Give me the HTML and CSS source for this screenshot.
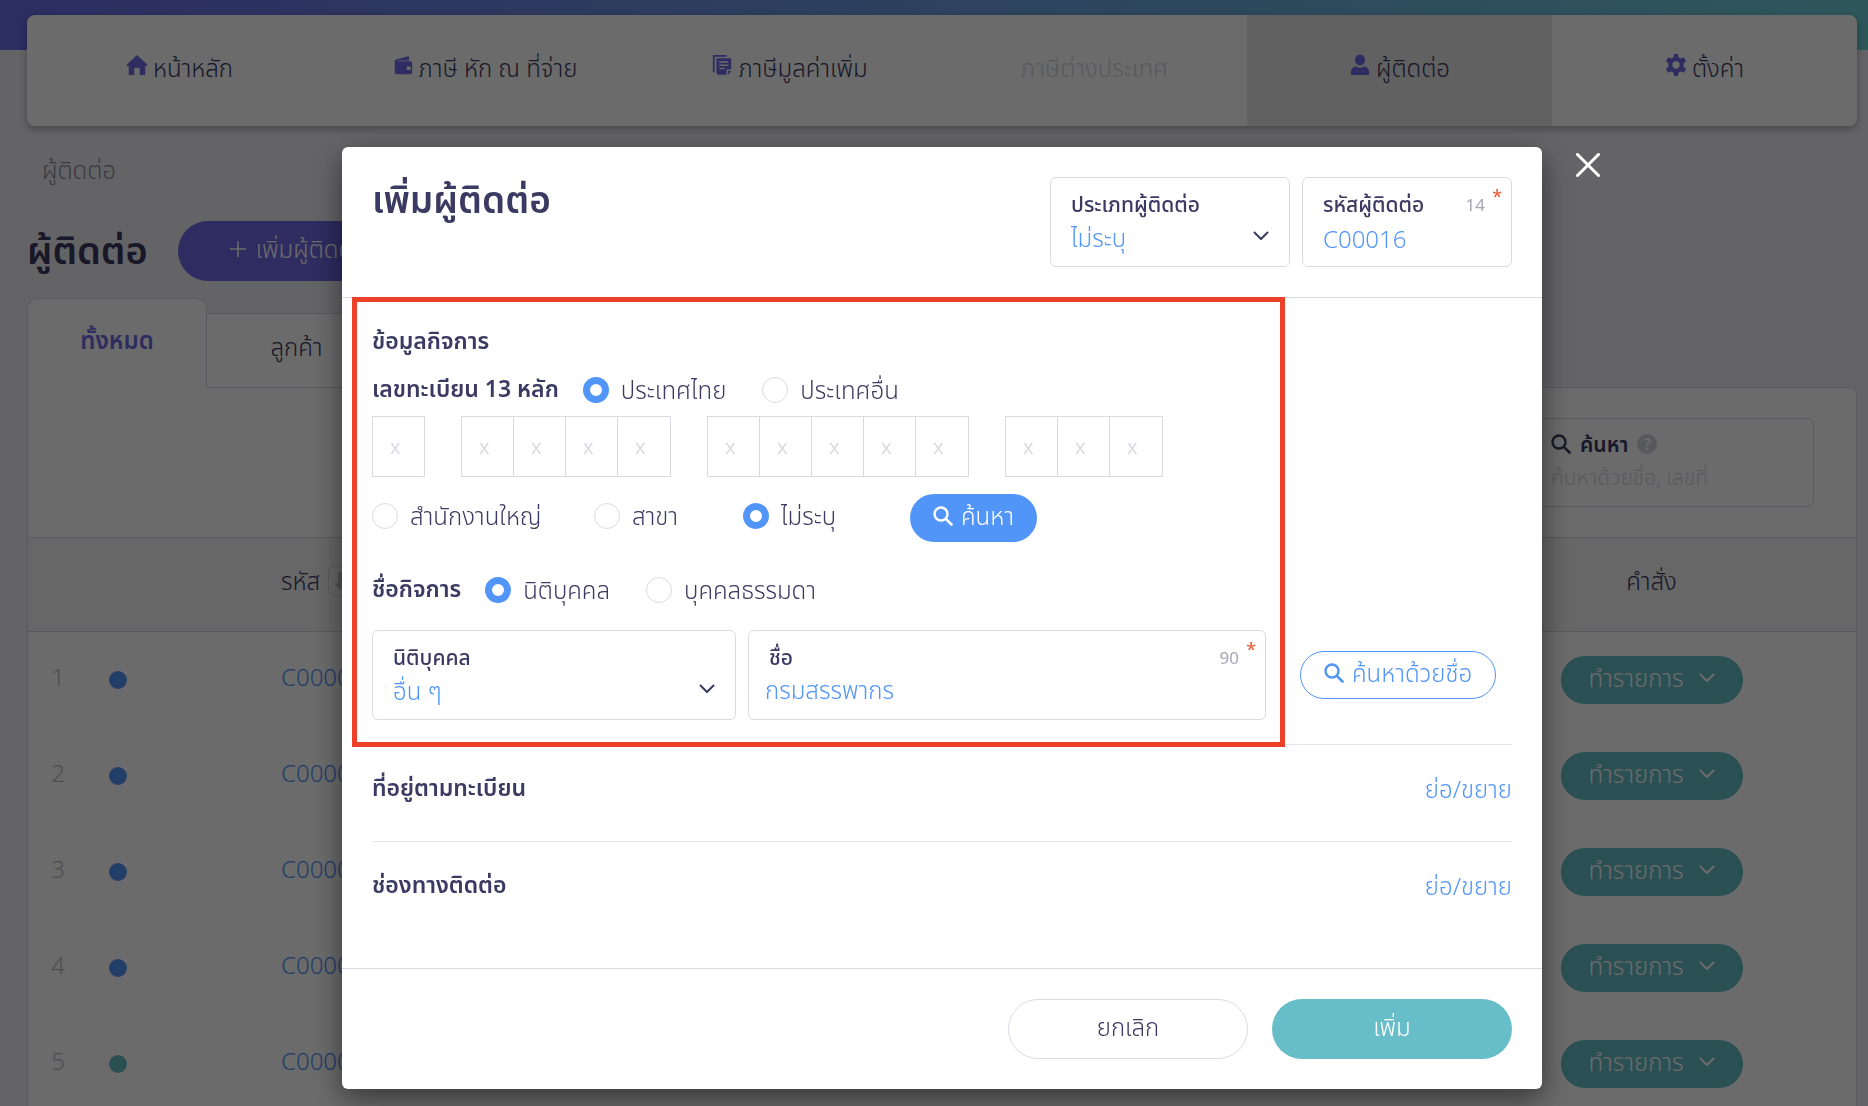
FILE: index.html
```html
<!DOCTYPE html>
<html lang="th">

<head>
    <meta charset="UTF-8">
    <meta name="viewport" content="width=device-width, initial-scale=1">
    <title>ผู้ติดต่อ</title>
    <link rel="stylesheet" href="styles.css">
</head>

<body>
    <!-- shared icons -->
    <svg class="sprite" aria-hidden="true">
        <symbol id="icon-search" viewBox="0 0 20 20">
            <circle cx="8" cy="8" r="6.5" fill="none" stroke="currentColor" stroke-width="2.4" />
            <path d="M12.8 12.8 18.5 18.5" stroke="currentColor" stroke-width="2.6" stroke-linecap="round" />
        </symbol>
        <symbol id="icon-down" viewBox="0 0 16 16">
            <path d="M1.500 4.500 8 11l6.500-6.500" fill="none" stroke="currentColor" stroke-width="2" stroke-linecap="round" stroke-linejoin="round" />
        </symbol>
    </svg>

    <div class="page">
        <header class="topbar">
            <nav class="menu">
                <a class="menu-item" href="#">
                    <svg class="menu-icon" viewBox="0 0 24 24"><path d="M12 1 1 11.500c-.6.7-.2 1.500.6 1.500H3v9c0 .8.4 1 1 1h5v-7c0-.6.4-1 1-1h4c.6 0 1 .4 1 1v7h5c.6 0 1-.4 1-1v-9h1.400c.8 0 1.200-.8.6-1.500z" /></svg>
                    หน้าหลัก
                </a>
                <a class="menu-item" href="#">
                    <svg class="menu-icon" viewBox="0 0 24 24"><path fill-rule="evenodd" d="M3 8.500C3 7 4 6.200 5.500 5.800L17 2.600c.8-.2 1.500.3 1.500 1.100V7H6v1h13.500C21 8 22 9 22 10.500v9c0 1.500-1 2.500-2.500 2.500h-14C4 22 3 21 3 19.500zM17 13.500c-.8 0-1 .5-1 1v2c0 .5.200 1 1 1h2.500c.6 0 1-.4 1-1v-2c0-.6-.4-1-1-1z" /></svg>
                    ภาษี หัก ณ ที่จ่าย
                </a>
                <a class="menu-item" href="#">
                    <svg class="menu-icon" viewBox="0 0 24 24"><path d="M2 1h15v2H4v17H2z" /><path fill-rule="evenodd" d="M6 4.500h16V17h-5v5.500H8c-1.200 0-2-.8-2-2zM9 8v1.600h10V8zm0 3.500v1.600h10v-1.600zM9 15v1.600h6V15zM18.500 18.500H22L18.500 22.500z" /></svg>
                    ภาษีมูลค่าเพิ่ม
                </a>
                <a class="menu-item disabled" href="#">ภาษีต่างประเทศ</a>
                <a class="menu-item active" href="#">
                    <svg class="menu-icon" viewBox="0 0 24 24"><ellipse cx="12" cy="6.500" rx="5.500" ry="6" /><path d="M2 23v-3c0-4 3-6.500 5.500-6.500 2.500 2 6.500 2 9 0C19 13.500 22 16 22 20v3z" /></svg>
                    ผู้ติดต่อ
                </a>
                <a class="menu-item" href="#">
                    <svg class="menu-icon" viewBox="0 0 24 24"><path fill-rule="evenodd" d="M10 0h4l.7 3.500 2.300 1.300L20.500 3.600l2.500 4.200-2.700 2.400v3.600l2.700 2.400-2.500 4.200-3.500-1.200-2.300 1.300L14 24h-4l-.7-3.500L7 19.200l-3.500 1.200L1 16.200l2.700-2.400v-3.600L1 7.800l2.500-4.200L7 4.800l2.300-1.300zm2 8a4 4 0 1 0 0 8 4 4 0 0 0 0-8z" /></svg>
                    ตั้งค่า
                </a>
            </nav>
        </header>

        <main class="content">
            <p class="breadcrumb">ผู้ติดต่อ</p>
            <div class="page-head">
                <h1>ผู้ติดต่อ</h1>
                <button class="btn-add" type="button">
                    <svg viewBox="0 0 16 16"><path d="M8 0v16M0 8h16" stroke="currentColor" stroke-width="1.600" /></svg>
                    เพิ่มผู้ติดต่อ
                </button>
            </div>

            <div class="tabs">
                <button class="tab current" type="button">ทั้งหมด</button>
                <button class="tab" type="button">ลูกค้า</button>
            </div>

            <section class="panel">
                <div class="filter">
                    <div class="search-box">
                        <label for="search">
                            <svg class="icon-search"><use href="#icon-search" /></svg>
                            ค้นหา
                            <span class="help">?</span>
                        </label>
                        <input id="search" type="text" placeholder="ค้นหาด้วยชื่อ, เลขที่">
                    </div>
                </div>

                <table class="contacts">
                    <thead>
                        <tr>
                            <th class="col-no"></th>
                            <th class="col-dot"></th>
                            <th class="col-code">
                                <span class="sortable">รหัส
                                    <span class="sort"><svg viewBox="0 0 12 20"><path d="M4 1h4v11h4l-6 7-6-7h4z" /></svg></span>
                                </span>
                            </th>
                            <th class="col-action">คำสั่ง</th>
                        </tr>
                    </thead>
                    <tbody>
                        <tr>
                            <td class="col-no">1</td>
                            <td class="col-dot"><span class="dot"></span></td>
                            <td class="col-code"><a href="#">C00001</a></td>
                            <td class="col-action"><button class="btn-action" type="button">ทำรายการ <svg class="icon-down"><use href="#icon-down" /></svg></button></td>
                        </tr>
                        <tr>
                            <td class="col-no">2</td>
                            <td class="col-dot"><span class="dot"></span></td>
                            <td class="col-code"><a href="#">C00002</a></td>
                            <td class="col-action"><button class="btn-action" type="button">ทำรายการ <svg class="icon-down"><use href="#icon-down" /></svg></button></td>
                        </tr>
                        <tr>
                            <td class="col-no">3</td>
                            <td class="col-dot"><span class="dot"></span></td>
                            <td class="col-code"><a href="#">C00003</a></td>
                            <td class="col-action"><button class="btn-action" type="button">ทำรายการ <svg class="icon-down"><use href="#icon-down" /></svg></button></td>
                        </tr>
                        <tr>
                            <td class="col-no">4</td>
                            <td class="col-dot"><span class="dot"></span></td>
                            <td class="col-code"><a href="#">C00004</a></td>
                            <td class="col-action"><button class="btn-action" type="button">ทำรายการ <svg class="icon-down"><use href="#icon-down" /></svg></button></td>
                        </tr>
                        <tr>
                            <td class="col-no">5</td>
                            <td class="col-dot"><span class="dot teal"></span></td>
                            <td class="col-code"><a href="#">C00005</a></td>
                            <td class="col-action"><button class="btn-action" type="button">ทำรายการ <svg class="icon-down"><use href="#icon-down" /></svg></button></td>
                        </tr>
                    </tbody>
                </table>
            </section>
        </main>
    </div>

    <div class="backdrop">
        <div class="modal" role="dialog" aria-modal="true" aria-labelledby="modalTitle">
            <button class="modal-close" type="button" aria-label="ปิด">
                <svg viewBox="0 0 24 24"><path d="M1.500 1.500l21 21M22.500 1.500l-21 21" stroke="currentColor" stroke-width="3" stroke-linecap="round" /></svg>
            </button>

            <div class="modal-header">
                <h2 id="modalTitle">เพิ่มผู้ติดต่อ</h2>
                <div class="field field-type">
                    <label for="contactType">ประเภทผู้ติดต่อ</label>
                    <select id="contactType">
                        <option>ไม่ระบุ</option>
                    </select>
                    <svg class="icon-down"><use href="#icon-down" /></svg>
                </div>
                <div class="field field-code">
                    <label for="contactCode">รหัสผู้ติดต่อ</label>
                    <span class="limit">14</span>
                    <span class="required">*</span>
                    <input id="contactCode" type="text" value="C00016">
                </div>
            </div>

            <div class="modal-body">
                <section class="company">
                    <h3>ข้อมูลกิจการ</h3>

                    <div class="line">
                        <h3>เลขทะเบียน 13 หลัก</h3>
                        <label class="radio"><input type="radio" name="country" checked>ประเทศไทย</label>
                        <label class="radio"><input type="radio" name="country">ประเทศอื่น</label>
                    </div>

                    <div class="tax-id">
                        <div class="digits">
                            <input type="text" placeholder="x" aria-label="หลักที่ 1">
                        </div>
                        <div class="digits">
                            <input type="text" placeholder="x" aria-label="หลักที่ 2">
                            <input type="text" placeholder="x" aria-label="หลักที่ 3">
                            <input type="text" placeholder="x" aria-label="หลักที่ 4">
                            <input type="text" placeholder="x" aria-label="หลักที่ 5">
                        </div>
                        <div class="digits">
                            <input type="text" placeholder="x" aria-label="หลักที่ 6">
                            <input type="text" placeholder="x" aria-label="หลักที่ 7">
                            <input type="text" placeholder="x" aria-label="หลักที่ 8">
                            <input type="text" placeholder="x" aria-label="หลักที่ 9">
                            <input type="text" placeholder="x" aria-label="หลักที่ 10">
                        </div>
                        <div class="digits">
                            <input type="text" placeholder="x" aria-label="หลักที่ 11">
                            <input type="text" placeholder="x" aria-label="หลักที่ 12">
                            <input type="text" placeholder="x" aria-label="หลักที่ 13">
                        </div>
                    </div>

                    <div class="branch">
                        <label class="radio"><input type="radio" name="branch">สำนักงานใหญ่</label>
                        <label class="radio"><input type="radio" name="branch">สาขา</label>
                        <label class="radio"><input type="radio" name="branch" checked>ไม่ระบุ</label>
                        <button class="btn-search" type="button"><svg class="icon-search"><use href="#icon-search" /></svg>ค้นหา</button>
                    </div>

                    <div class="line">
                        <h3>ชื่อกิจการ</h3>
                        <label class="radio"><input type="radio" name="kind" checked>นิติบุคคล</label>
                        <label class="radio"><input type="radio" name="kind">บุคคลธรรมดา</label>
                    </div>

                    <div class="name-row">
                        <div class="field field-kind">
                            <label for="companyKind">นิติบุคคล</label>
                            <select id="companyKind">
                                <option>อื่น ๆ</option>
                            </select>
                            <svg class="icon-down"><use href="#icon-down" /></svg>
                        </div>
                        <div class="field field-name">
                            <label for="companyName">ชื่อ</label>
                            <span class="limit">90</span>
                            <span class="required">*</span>
                            <input id="companyName" type="text" value="กรมสรรพากร">
                        </div>
                        <div class="name-search">
                            <button class="btn-search outline" type="button"><svg class="icon-search"><use href="#icon-search" /></svg>ค้นหาด้วยชื่อ</button>
                        </div>
                    </div>

                    <!-- red frame over the part to fill in -->
                    <div class="highlight"></div>
                </section>

                <section class="fold">
                    <h3>ที่อยู่ตามทะเบียน</h3>
                    <a href="#">ย่อ/ขยาย</a>
                </section>
                <section class="fold">
                    <h3>ช่องทางติดต่อ</h3>
                    <a href="#">ย่อ/ขยาย</a>
                </section>
            </div>

            <div class="modal-footer">
                <button class="btn-cancel" type="button">ยกเลิก</button>
                <button class="btn-submit" type="button">เพิ่ม</button>
            </div>
        </div>
    </div>
</body>

</html>
```
FILE: styles.css
```css
* {
    box-sizing: border-box;
}

body {
    margin: 0;
    height: 100vh;
    overflow: hidden;
    background: #efeff5;
    color: #3b3a62;
    font-family: "Noto Sans", "Noto Sans Thai", sans-serif;
    font-size: 24px;
    font-weight: 300;
    line-height: 32px;
}

button,
input,
select {
    font: inherit;
    color: inherit;
}

button {
    border: 0;
    cursor: pointer;
}

a {
    color: #5295f8;
    text-decoration: none;
}

h1,
h2,
h3,
p {
    margin: 0;
}

h3 {
    padding-bottom: 4px;
    font-size: 23px;
    font-weight: 600;
    line-height: 28px;
}

.sprite {
    display: none;
}

.icon-search {
    width: 20px;
    height: 20px;
    flex: none;
}

.icon-down {
    width: 16px;
    height: 16px;
    flex: none;
}

/* page */

.page {
    height: 100vh;
    overflow: hidden;
    background: linear-gradient(90deg, #6a6ce8, #6fd0da) top / 100% 50px no-repeat;
}

.topbar {
    padding: 15px 11px 0 27px;
}

.menu {
    display: flex;
    height: 111px;
    background: #fff;
    border-radius: 8px;
    overflow: hidden;
    box-shadow: 0 3px 8px rgba(0, 0, 0, 0.3);
}

.menu-item {
    flex: 1;
    display: flex;
    align-items: center;
    justify-content: center;
    gap: 5px;
    padding-bottom: 6px;
    color: #3b3a62;
}

.menu-item.disabled {
    color: #d5d5dc;
}

.menu-item.active {
    background: #e6e6e6;
}

.menu-icon {
    width: 22px;
    height: 24px;
    margin-bottom: 6px;
    fill: #6e69e5;
}

.content {
    padding: 0 11px 0 27px;
}

.breadcrumb {
    padding: 28px 15px 35px;
    color: #8e8e9c;
}

.page-head {
    display: flex;
    align-items: center;
    gap: 30px;
}

h1 {
    font-size: 38px;
    font-weight: 600;
    line-height: 48px;
    padding-bottom: 4px;
}

.btn-add {
    display: flex;
    align-items: center;
    gap: 10px;
    height: 60px;
    padding: 0 52px 4px;
    border-radius: 30px;
    background: #6e69e5;
    color: #fff;
}

.btn-add svg {
    width: 16px;
    height: 16px;
}

.tabs {
    display: flex;
    align-items: flex-end;
    margin-top: 17px;
}

.tab {
    width: 180px;
    height: 74px;
    padding-bottom: 8px;
    background: #fff;
    border: 1px solid #d5d5e2;
    border-left: 0;
    border-bottom: 0;
}

.tab.current {
    height: 89px;
    border-left: 1px solid #d5d5e2;
    border-radius: 10px 10px 0 0;
    color: #6e69e5;
    font-weight: 600;
}

/* the open tab runs into the panel below it */
.tab.current {
    position: relative;
    margin-bottom: -1px;
    height: 90px;
}

.panel {
    background: #fff;
    border: 1px solid #d5d5e2;
    border-radius: 0 8px 0 0;
}

.filter {
    display: flex;
    justify-content: flex-end;
    padding: 30px 42px;
}

.search-box {
    width: 290px;
    height: 89px;
    padding: 9px 26px;
    border: 1px solid #d5d5e2;
    border-radius: 6px;
}

.search-box label {
    display: flex;
    align-items: center;
    gap: 9px;
    font-size: 21px;
    font-weight: 600;
}

.search-box input {
    width: 100%;
    height: 34px;
    padding: 0;
    border: 0;
    font-size: 21px;
}

.search-box input::placeholder {
    color: #d5d5dc;
}

.help {
    width: 20px;
    height: 20px;
    border-radius: 50%;
    background: #d2d3dc;
    color: #fff;
    font-size: 16px;
    line-height: 20px;
    text-align: center;
}

.contacts {
    width: 100%;
    border-collapse: collapse;
}

.contacts th {
    height: 94px;
    padding: 0 0 8px;
    background: #f5f5f5;
    border: solid #d5d5e2;
    border-width: 1px 0;
    font-weight: 300;
}

.contacts td {
    height: 96px;
    padding: 0 0 6px;
}

.contacts .col-no {
    width: 60px;
    color: #b9b9c2;
    text-align: center;
}

.contacts .col-dot {
    width: 60px;
    padding: 0;
}

.contacts .col-code {
    padding-left: 133px;
    text-align: left;
}

.contacts .col-action {
    width: 409px;
    text-align: center;
}

.contacts td.col-action {
    padding: 0;
}

.dot {
    display: block;
    width: 18px;
    height: 18px;
    margin: 0 auto;
    border-radius: 50%;
    background: #5295f8;
}

.dot.teal {
    background: #68bec8;
}

.sortable {
    display: inline-flex;
    align-items: center;
    gap: 8px;
}

.sort {
    display: inline-flex;
    padding: 4px 5px;
    border: 1px solid #d5d5e2;
    border-radius: 5px;
}

.sort svg {
    width: 12px;
    height: 20px;
    fill: #c5c5cd;
}

.btn-action {
    display: flex;
    align-items: center;
    justify-content: center;
    gap: 15px;
    width: 182px;
    height: 48px;
    margin: 0 auto;
    padding: 0 0 4px;
    border-radius: 24px;
    background: #68bec8;
    color: #fff;
}

/* modal */

.backdrop {
    position: fixed;
    inset: 0;
    padding: 147px 0 0 16px;
    background: rgba(0, 0, 0, 0.58);
}

.modal {
    position: relative;
    max-width: 1200px;
    margin: 0 auto;
    background: #fff;
    border-radius: 6px;
    box-shadow: 0 10px 30px rgba(0, 0, 0, 0.5);
}

.modal-close {
    position: absolute;
    top: 6px;
    right: -58px;
    padding: 0;
    background: none;
    color: #fff;
}

.modal-close svg {
    display: block;
    width: 24px;
    height: 24px;
}

.modal-header {
    display: flex;
    align-items: flex-start;
    gap: 12px;
    padding: 30px;
    border-bottom: 1px solid #dadae5;
}

.modal-header h2 {
    flex: 1;
    font-size: 37px;
    font-weight: 600;
    line-height: 44px;
}

.field {
    position: relative;
    display: flex;
    flex-direction: column;
    height: 90px;
    padding: 10px 20px;
    border: 1px solid #dadae5;
    border-radius: 6px;
}

.field label {
    font-size: 21px;
    font-weight: 500;
}

.field input,
.field select {
    width: 100%;
    height: 36px;
    padding: 0;
    border: 0;
    background: none;
    color: #5295f8;
    appearance: none;
}

.field .icon-down {
    position: absolute;
    right: 20px;
    bottom: 22px;
    pointer-events: none;
}

.limit {
    position: absolute;
    top: 15px;
    right: 26px;
    color: #a5a5b5;
    font-size: 17px;
    font-weight: 400;
    line-height: 24px;
}

.required {
    position: absolute;
    top: 6px;
    right: 9px;
    color: #e8603c;
    font-size: 18px;
    font-weight: 500;
    line-height: 24px;
}

.field-type {
    width: 240px;
}

.field-code {
    width: 210px;
}

.modal-body {
    padding: 0 30px 30px;
}

.company {
    position: relative;
    padding: 28px 0 24px;
}

.line {
    display: flex;
    align-items: center;
    gap: 24px;
    height: 32px;
    margin-top: 16px;
}

.line .radio + .radio {
    margin-left: 12px;
}

.radio {
    display: inline-flex;
    align-items: center;
    gap: 12px;
}

.radio input {
    width: 26px;
    height: 26px;
    margin: 0;
    border: 1px solid #dadae5;
    border-radius: 50%;
    appearance: none;
}

.radio input:checked {
    border: 7px solid #5295f8;
}

.tax-id {
    display: flex;
    gap: 36px;
    margin-top: 10px;
}

.digits {
    display: flex;
    border: solid #dadae5;
    border-width: 1px 0 1px 1px;
}

.digits input {
    width: 52px;
    height: 59px;
    padding: 0 0 0 17px;
    border: 0;
    border-right: 1px solid #dadae5;
    font-size: 20px;
}

.digits input + input:last-child {
    width: 53px;
}

.digits input::placeholder {
    color: #dadae0;
    font-weight: 400;
}

.branch {
    display: grid;
    grid-template-columns: 222px 149px 167px auto;
    align-items: center;
    justify-content: start;
    margin-top: 17px;
}

.branch .radio {
    padding-bottom: 4px;
}

.btn-search {
    display: inline-flex;
    align-items: center;
    gap: 8px;
    height: 48px;
    padding: 0 23px 4px;
    border-radius: 24px;
    background: #5295f8;
    color: #fff;
}

.btn-search.outline {
    background: #fff;
    border: 1px solid #5295f8;
    color: #5295f8;
}

.branch + .line {
    margin-top: 32px;
}

.name-row {
    display: grid;
    grid-template-columns: 364px 1fr 234px;
    align-items: center;
    gap: 12px;
    margin-top: 24px;
}

.field-name {
    padding-left: 16px;
}

.field-name label {
    padding-left: 4px;
}

.name-search {
    padding-left: 22px;
}

.highlight {
    position: absolute;
    inset: -1px 227px -3px -20px;
    border: 5px solid #ec4128;
    pointer-events: none;
}

.fold {
    display: flex;
    justify-content: space-between;
    padding: 28px 0 36px;
    border-top: 1px solid #e4e4e8;
}

.modal-footer {
    display: flex;
    justify-content: flex-end;
    gap: 24px;
    padding: 30px;
    border-top: 1px solid #dadae5;
}

.modal-footer button {
    width: 240px;
    height: 60px;
    padding-bottom: 6px;
    border-radius: 30px;
}

.modal-footer .btn-cancel {
    background: #fff;
    border: 1px solid #dadae5;
}

.modal-footer .btn-submit {
    background: #68bec8;
    color: #fff;
}
```
